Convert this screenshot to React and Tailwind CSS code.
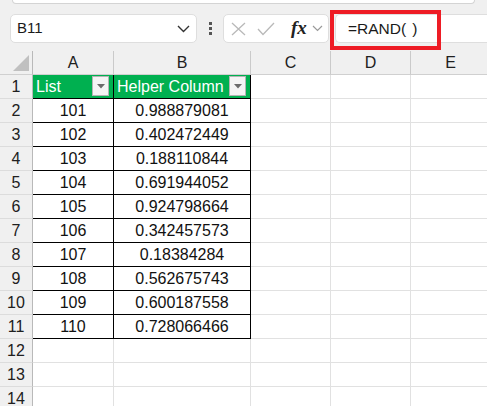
import React from "react";

const rows = [
  ["101", "0.988879081"],
  ["102", "0.402472449"],
  ["103", "0.188110844"],
  ["104", "0.691944052"],
  ["105", "0.924798664"],
  ["106", "0.342457573"],
  ["107", "0.18384284"],
  ["108", "0.562675743"],
  ["109", "0.600187558"],
  ["110", "0.728066466"],
];

const cols = ["A", "B", "C", "D", "E"];

function FilterButton() {
  return (
    <div className="absolute right-[4px] top-[1px] w-[17px] h-[20px] bg-[#f4f4f4] border border-[#b4b4b4] flex items-center justify-center">
      <svg width="8" height="5" viewBox="0 0 8 5">
        <path d="M0 0 L8 0 L4 4.5 Z" fill="#6b6b6b" />
      </svg>
    </div>
  );
}

function RowHeader({ n }) {
  return (
    <div className="h-[24px] bg-[#f0f0f0] border-r border-[#b9b9b9] border-b border-b-[#dcdcdc] flex items-center justify-center text-[16px] text-[#202020]">
      {n}
    </div>
  );
}

function EmptyCell() {
  return <div className="h-[24px] bg-white border-r border-b border-[#e1e1e1]" />;
}

export default function App() {
  return (
    <div
      className="w-[487px] h-[406px] overflow-hidden bg-[#f0f0f0] relative"
      style={{ fontFamily: '"Liberation Sans", Arial, sans-serif' }}
    >
      {/* ribbon bottom edge */}
      <div className="h-[4px] mx-[12px] bg-white border-x border-b border-[#d4d4d4] rounded-b-[6px]" />

      {/* formula bar */}
      <div className="h-[47px] flex items-start pt-[10px] relative">
        <div className="ml-[10px] w-[187px] h-[29px] bg-white border border-[#dedede] rounded-[5px] flex items-center justify-between pl-[6px] pr-[6px]">
          <span className="text-[15px] text-[#1a1a1a]">B11</span>
          <svg width="13" height="8" viewBox="0 0 13 8">
            <path d="M1 1 L6.5 6.5 L12 1" fill="none" stroke="#333" strokeWidth="1.4" />
          </svg>
        </div>
        <div className="w-[26px] h-[29px] flex flex-col items-center justify-center gap-[2px]">
          <div className="w-[3px] h-[3px] bg-[#555]" />
          <div className="w-[3px] h-[3px] bg-[#555]" />
          <div className="w-[3px] h-[3px] bg-[#555]" />
        </div>
        <div className="w-[106px] h-[29px] bg-white border border-[#dedede] rounded-[5px] flex items-center pl-[7px]">
          <svg width="15" height="14" viewBox="0 0 15 14">
            <path d="M1 1 L14 13 M14 1 L1 13" stroke="#b9b9b9" strokeWidth="1.3" fill="none" />
          </svg>
          <svg className="ml-[11px]" width="18" height="14" viewBox="0 0 18 14">
            <path d="M1 7 L6 12.5 L17 1" stroke="#b9b9b9" strokeWidth="1.3" fill="none" />
          </svg>
          <span
            className="ml-[16px] text-[19px] italic font-bold text-[#222] leading-none -mt-[2px]"
            style={{ fontFamily: '"Liberation Serif", "Times New Roman", serif' }}
          >
            fx
          </span>
          <svg className="ml-[5px]" width="11" height="7" viewBox="0 0 11 7">
            <path d="M1 1 L5.5 5.5 L10 1" fill="none" stroke="#9a9a9a" strokeWidth="1.2" />
          </svg>
        </div>
        <div className="ml-[6px] flex-1 h-[29px] bg-white border border-[#dedede] border-r-0 rounded-l-[5px] flex items-center pl-[12px]">
          <span className="text-[15.5px] text-[#1a1a1a]">
            =RAND(<span className="inline-block w-[6px]" />)
          </span>
        </div>
        {/* highlight box */}
        <div className="absolute left-[330px] top-[6px] w-[111px] h-[40px] border-[4px] border-[#ee1c25]" />
      </div>

      {/* grid */}
      <div className="grid grid-cols-[33px_81px_137px_80px_80px_80px]">
        <div className="h-[24px] bg-[#f0f0f0] border-r border-[#b9b9b9] border-b border-b-[#d0d0d0] relative">
          <svg className="absolute right-[3px] bottom-[3px]" width="16" height="16" viewBox="0 0 16 16">
            <path d="M16 0 L16 16 L0 16 Z" fill="#c0c0c0" />
          </svg>
        </div>
        {cols.map((c) => (
          <div
            key={c}
            className="h-[24px] bg-[#f0f0f0] border-r border-[#cacaca] border-b border-b-[#d0d0d0] flex items-center justify-center text-[16px] text-[#202020]"
          >
            {c}
          </div>
        ))}

        <RowHeader n={1} />
        <div className="h-[24px] bg-[#00b050] border-r border-b border-black relative flex items-center pl-[3px] text-white text-[16px]">
          List
          <FilterButton />
        </div>
        <div className="h-[24px] bg-[#00b050] border-r border-b border-black relative flex items-center pl-[3px] text-white text-[16px]">
          Helper Column
          <FilterButton />
        </div>
        <EmptyCell />
        <EmptyCell />
        <EmptyCell />

        {rows.map(([a, b], i) => (
          <React.Fragment key={a}>
            <RowHeader n={i + 2} />
            <div className="h-[24px] bg-white border-r border-b border-black flex items-center justify-center text-[16px] text-[#111]">
              {a}
            </div>
            <div className="h-[24px] bg-white border-r border-b border-black flex items-center justify-center text-[16px] text-[#111]">
              {b}
            </div>
            <EmptyCell />
            <EmptyCell />
            <EmptyCell />
          </React.Fragment>
        ))}

        {[12, 13, 14].map((n) => (
          <React.Fragment key={n}>
            <RowHeader n={n} />
            <EmptyCell />
            <EmptyCell />
            <EmptyCell />
            <EmptyCell />
            <EmptyCell />
          </React.Fragment>
        ))}
      </div>
    </div>
  );
}
